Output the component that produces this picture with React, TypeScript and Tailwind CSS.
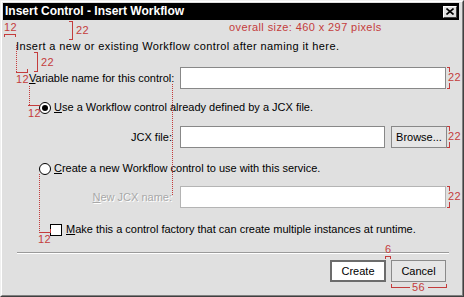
import React from 'react';

function Radio({ checked }: { checked?: boolean }) {
  return (
    <span className="flex h-[12px] w-[12px] shrink-0 items-center justify-center rounded-full border border-black bg-white">
      {checked && <span className="h-[6px] w-[6px] rounded-full bg-black" />}
    </span>
  );
}

// red-line spec overlay drawn over the dialog
function Annotations() {
  const solid = [
    'M4.5 37V34.5H15.5V37',
    'M69 21.5H72.5V39.5H69',
    'M34 52.5H37.5V71.5H34',
    'M16 72.5H27.5V69',
    'M28 105.5H40',
    'M447 67.5H449.5V72 M449.5 83V88.5H447',
    'M447 126.5H449.5V131 M449.5 142V147.5H447',
    'M447 186.5H449.5V191 M449.5 202V207.5H447',
    'M39 232.5H50.5V229',
    'M385.5 259V256.5H390.5V259',
    'M391.5 284V287.5H410 M428 287.5H446.5V284',
  ];
  const dotted = ['M16.5 45V72', 'M29.5 86V105', 'M172.5 84V195', 'M39.5 174V232'];
  const labels: [string, number, number][] = [
    ['overall size: 460 x 297 pixels', 229, 31],
    ['12', 4, 31],
    ['22', 76, 34],
    ['22', 41, 66],
    ['12', 16, 83],
    ['12', 28, 117],
    ['22', 448, 81],
    ['22', 448, 140],
    ['22', 448, 200],
    ['12', 38, 243],
    ['6', 385, 253],
    ['56', 412, 291],
  ];
  return (
    <svg className="pointer-events-none absolute inset-0" width="464" height="297" viewBox="0 0 464 297">
      <g stroke="#c43c3c" strokeWidth="1" fill="none" shapeRendering="crispEdges">
        {solid.map((d) => (
          <path key={d} d={d} />
        ))}
        {dotted.map((d) => (
          <path key={d} d={d} strokeDasharray="1 1" />
        ))}
      </g>
      <g fill="#c43c3c" fontFamily="'Liberation Sans', Arial, sans-serif" fontSize="11" letterSpacing="0.4">
        {labels.map(([t, x, y]) => (
          <text key={`${t}-${x}-${y}`} x={x} y={y}>
            {t}
          </text>
        ))}
      </g>
    </svg>
  );
}

export default function App() {
  return (
    <div className="relative h-[297px] w-[464px] overflow-hidden bg-[#e0e0e0] font-['Liberation_Sans',Arial,sans-serif] text-[11px] text-black">
      <div className="h-full border border-t-[#f0f0f0] border-l-[#f0f0f0] border-r-[#404040] border-b-[#404040]">
        <div className="flex h-full flex-col border border-t-white border-l-white border-r-[#808080] border-b-[#808080] p-[1px]">
          {/* title bar */}
          <div className="mr-[2px] flex h-[17px] items-center justify-between bg-black pl-[2px] pr-[2px]">
            <span className="text-[12px] font-bold leading-[17px] text-white">Insert Control - Insert Workflow</span>
            <button className="flex h-[12px] w-[14px] items-center justify-center border border-t-white border-l-white border-r-[#404040] border-b-[#404040] bg-[#e0e0e0]">
              <svg width="8" height="7" viewBox="0 0 8 7">
                <path d="M0.5 0.5 L7.5 6.5 M7.5 0.5 L0.5 6.5" stroke="black" strokeWidth="1.6" />
              </svg>
            </button>
          </div>

          <div className="flex flex-col pl-[13px] pr-[15px]">
            <p className="mt-[20px] h-[13px] leading-[13px] tracking-[0.4px]">Insert a new or existing Workflow control after naming it here.</p>

            <div className="mt-[14px] ml-[13px] grid grid-cols-[143px_1fr] items-center gap-x-[8px]">
              <label className="whitespace-nowrap text-right"><u>V</u>ariable name for this control:</label>
              <div className="h-[22px] border border-[#888888] bg-white" />
            </div>

            <div className="mt-[12px] ml-[23px] flex h-[13px] items-center gap-[3px]">
              <Radio checked />
              <span><u>U</u>se a Workflow control already defined by a JCX file.</span>
            </div>

            <div className="mt-[12px] ml-[13px] grid grid-cols-[143px_1fr] items-center gap-x-[8px]">
              <label className="whitespace-nowrap text-right">JCX file:</label>
              <div className="flex gap-[6px]">
                <div className="h-[22px] flex-1 border border-[#888888] bg-white" />
                <button className="-mr-[1px] h-[22px] w-[56px] border border-[#888888] bg-[#e6e6e6]">Browse...</button>
              </div>
            </div>

            <div className="mt-[14px] ml-[23px] flex h-[13px] items-center gap-[3px]">
              <Radio />
              <span><u>C</u>reate a new Workflow control to use with this service.</span>
            </div>

            <div className="mt-[11px] ml-[13px] grid grid-cols-[143px_1fr] items-center gap-x-[8px]">
              <label className="whitespace-nowrap text-right text-[#a8a8a8] [text-shadow:1px_1px_0_#ffffff]"><u>N</u>ew JCX name:</label>
              <div className="h-[22px] border border-[#b4b4b4] bg-white" />
            </div>

            <div className="mt-[15px] ml-[34px] flex h-[13px] items-center gap-[4px]">
              <span className="h-[12px] w-[12px] shrink-0 border border-black bg-white" />
              <span><u>M</u>ake this a control factory that can create multiple instances at runtime.</span>
            </div>

            <div className="mt-[16px] ml-[1px] -mr-[3px] h-[1px] bg-[#9a9a9a]" />
            <div className="ml-[1px] -mr-[3px] h-[1px] bg-white" />

            <div className="mt-[6px] flex justify-end gap-[5px]">
              <button className="h-[22px] w-[56px] border-2 border-[#6c6c6c] bg-white">Create</button>
              <button className="h-[22px] w-[55px] border border-[#8a8a8a] bg-[#e6e6e6]">Cancel</button>
            </div>
          </div>
        </div>
      </div>
      <Annotations />
    </div>
  );
}
